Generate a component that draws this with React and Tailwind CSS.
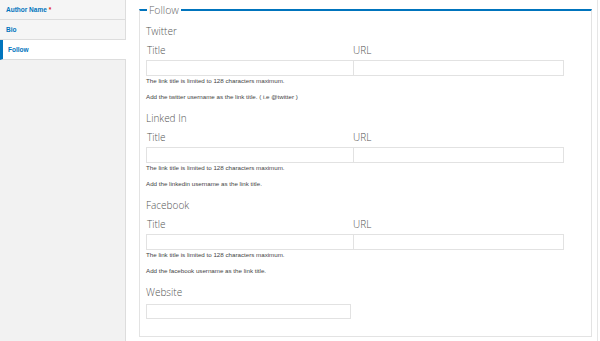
const sections = [
  { name: 'Twitter', hint: 'Add the twitter username as the link title. ( i.e @twitter )' },
  { name: 'Linked In', hint: 'Add the linkedin username as the link title.' },
  { name: 'Facebook', hint: 'Add the facebook username as the link title.' },
]

function SideTab({ label, required, active }) {
  if (active) {
    return (
      <div className="-mr-px h-[20px] border-l-[3px] border-b border-[#0074bd] border-b-[#dddddd] bg-white pl-[5px] text-[6.5px] font-bold leading-[20px] text-[#0074bd]">
        {label}
      </div>
    )
  }
  return (
    <div className="h-[20px] border-b border-[#dddddd] bg-[#f5f5f5] pl-[6px] text-[6.5px] font-bold leading-[19px] text-[#0074bd]">
      {label}
      {required ? <span className="ml-[2px] text-[#e2231a]">*</span> : null}
    </div>
  )
}

function LinkSection({ name, hint }) {
  return (
    <div className="pb-[6px]">
      <div className="h-[20px] text-[10px] font-light leading-[20px] text-[#555555]">{name}</div>
      <div className="flex h-[18px] text-[10px] font-light leading-[19px] text-[#555555]">
        <span className="w-[207px] pl-px">Title</span>
        <span>URL</span>
      </div>
      <div className="mt-px flex">
        <input className="block h-[16px] w-[208px] border border-[#e2e2e2] bg-white" />
        <input className="-ml-px block h-[16px] w-[211px] border border-[#e2e2e2] bg-white" />
      </div>
      <p className="h-[10px] text-[6.2px] leading-[10px] text-[#444444]" style={{ fontFamily: '"Liberation Sans", Arial, sans-serif' }}>
        The link title is limited to 128 characters maximum.
      </p>
      <p className="mt-[6px] h-[10px] text-[6.2px] leading-[10px] text-[#444444]" style={{ fontFamily: '"Liberation Sans", Arial, sans-serif' }}>
        {hint}
      </p>
    </div>
  )
}

export default function App() {
  return (
    <div className="flex h-[341px] w-[600px] overflow-hidden bg-white font-['Open_Sans',sans-serif]">
      <aside className="w-[126px] shrink-0 border-r border-[#dddddd] bg-[#f2f2f2] font-['Liberation_Sans',Arial,sans-serif]">
        <SideTab label="Author Name" required />
        <SideTab label="Bio" />
        <SideTab label="Follow" active />
      </aside>

      <main className="w-[472px] shrink-0 border-r border-[#e6e6e6] pl-[13px] pr-[5px]">
        <fieldset className="h-[337px] border border-[#e3e3e3] border-t-2 border-t-[#0074bd] px-[6px]">
          <legend className="ml-px px-[2px] text-[10.5px] font-light leading-[20px] text-[#666666]">Follow</legend>
          <div className="pt-px">
            {sections.map((s) => (
              <LinkSection key={s.name} name={s.name} hint={s.hint} />
            ))}
            <div className="h-[20px] text-[10px] font-light leading-[20px] text-[#555555]">Website</div>
            <input className="mt-[2px] block h-[15px] w-[205px] border border-[#e2e2e2] bg-white" />
          </div>
        </fieldset>
      </main>
    </div>
  )
}
